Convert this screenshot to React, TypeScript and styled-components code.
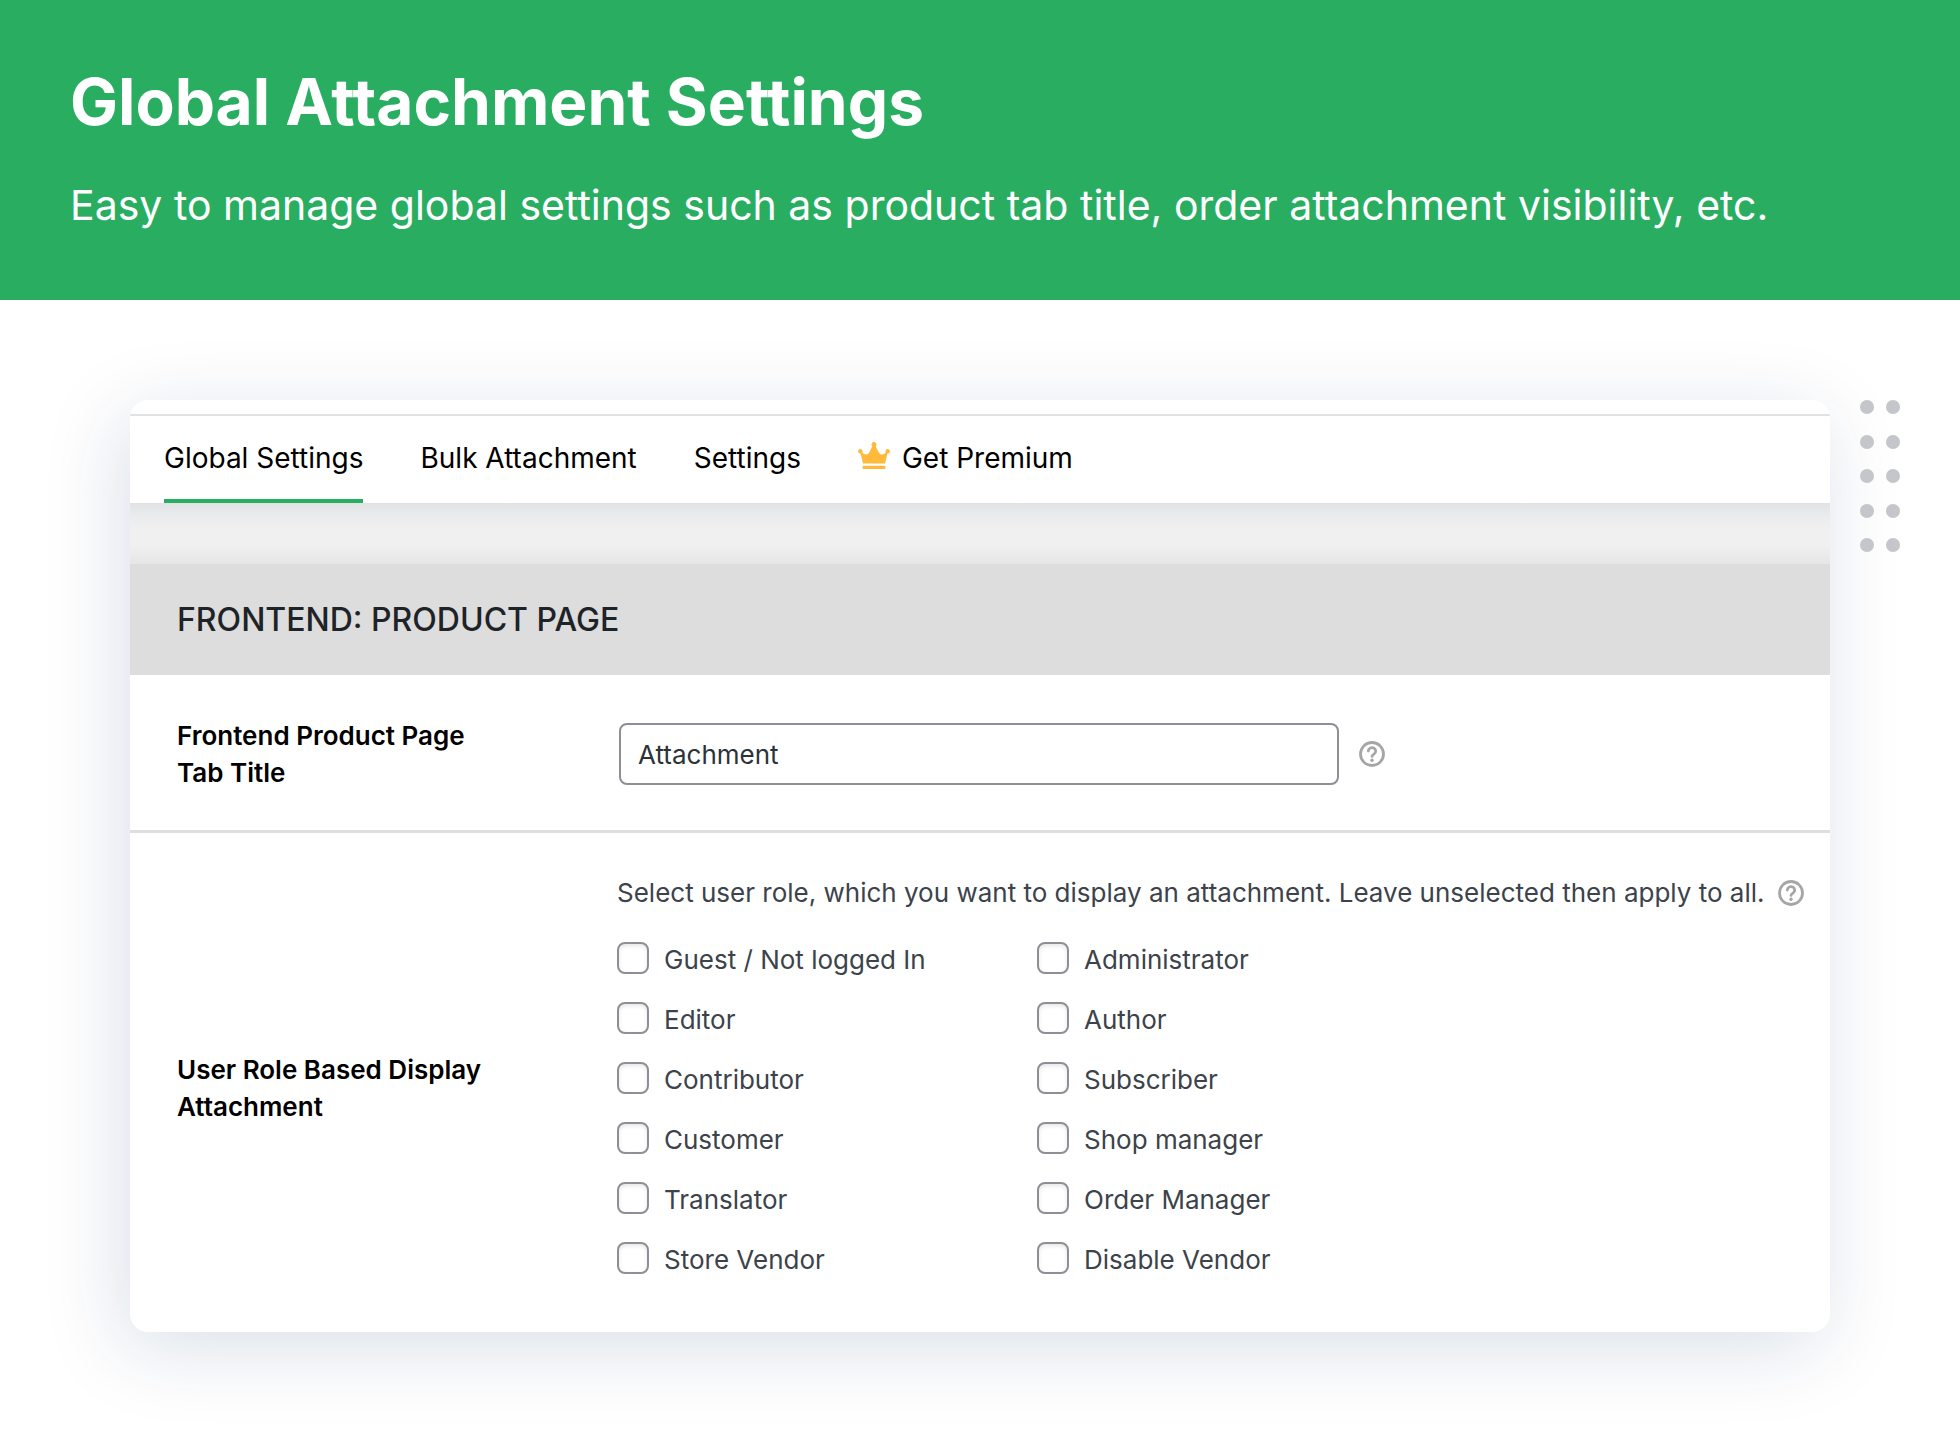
import React from "react";
import styled, { createGlobalStyle } from "styled-components";

const GlobalStyle = createGlobalStyle`
  *, *::before, *::after { box-sizing: border-box; }
  body {
    margin: 0;
    background: #ffffff;
    color: #3c434a;
    font-family: Inter, "Liberation Sans", sans-serif;
    font-size: 26px;
    line-height: 36px;
  }
`;

const Banner = styled.header`
  background: #29ae61;
  color: #ffffff;
  padding: 60px 70px 64px;
`;

const BannerTitle = styled.h1`
  margin: 0;
  font-size: 64px;
  font-weight: 700;
  line-height: 84px;
`;

const BannerText = styled.p`
  margin: 30px 0 0;
  font-size: 41px;
  font-weight: 400;
  line-height: 62px;
`;

const Stage = styled.main`
  display: flex;
  align-items: flex-start;
  gap: 30px;
  padding: 100px 60px 100px 130px;
`;

const Card = styled.section`
  flex: 1;
  min-width: 0;
  padding-top: 14px;
  overflow: hidden;
  border-radius: 18px;
  background: #ffffff;
  box-shadow: -8px 16px 80px rgba(2, 48, 102, 0.15);
`;

const Tabs = styled.nav`
  display: flex;
  gap: 57px;
  padding: 0 34px;
  border-top: 2px solid #e2e2e2;
`;

const Tab = styled.a<{ $active?: boolean }>`
  display: flex;
  align-items: center;
  gap: 12px;
  padding: 24px 0 23px;
  border-bottom: 4px solid ${(p) => (p.$active ? "#27ae60" : "transparent")};
  color: #000000;
  font-size: 28px;
  line-height: 36px;
  text-decoration: none;
  white-space: nowrap;
`;

const Band = styled.div`
  height: 61px;
  background: linear-gradient(#e1e2e4, #eaebec 12px, #f0f0f0 26px, #f0f0f0 42px, #e6e6e6);
`;

const SectionTitle = styled.h2`
  margin: 0;
  padding: 38px 47px;
  background: #dddddd;
  color: #1d2327;
  font-size: 32px;
  font-weight: 500;
  line-height: 35px;
`;

const Row = styled.div<{ $last?: boolean }>`
  display: grid;
  grid-template-columns: 392px 1fr;
  gap: 48px;
  align-items: center;
  padding: 42px 24px ${(p) => (p.$last ? 32 : 39)}px 47px;

  & + & {
    border-top: 3px solid #dfdfdf;
  }
`;

const labelText = `
  max-width: 320px;
  color: #000000;
  font-weight: 600;
  line-height: 37px;
`;

const FieldLabel = styled.label`
  ${labelText}
`;

const GroupLabel = styled.div`
  ${labelText}
`;

const Field = styled.div`
  display: flex;
  align-items: center;
  gap: 20px;
  padding-left: 2px;
`;

const TextInput = styled.input`
  width: 720px;
  height: 62px;
  padding: 0 17px;
  border: 2px solid #8c8f94;
  border-radius: 8px;
  background: #ffffff;
  color: #2c3338;
  font: inherit;
`;

const HelpButton = styled.button`
  display: inline-flex;
  flex: none;
  padding: 0;
  border: 0;
  background: none;
  color: #a6a6a6;
  cursor: help;
`;

const Group = styled.div``;

const Description = styled.div`
  display: flex;
  align-items: center;
  gap: 13px;
`;

const Options = styled.div`
  display: grid;
  grid-template-columns: repeat(2, 420px);
  row-gap: 24px;
  margin-top: 31px;
  padding-bottom: 22px;
`;

const Option = styled.label`
  display: flex;
  align-items: flex-start;
  gap: 15px;
`;

const Checkbox = styled.input`
  appearance: none;
  flex: none;
  width: 32px;
  height: 32px;
  margin: 0;
  border: 2px solid #8c8f94;
  border-radius: 8px;
  background: #ffffff;
  box-shadow: inset 0 2px 4px rgba(0, 0, 0, 0.1);

  &:checked {
    background: #27ae60;
  }
`;

const Dots = styled.div`
  display: grid;
  grid-template-columns: repeat(2, 14px);
  justify-content: space-between;
  align-content: space-between;
  width: 40px;
  height: 152px;
`;

const Dot = styled.span`
  height: 14px;
  border-radius: 50%;
  background: #c4c6cb;
`;

const CrownIcon = () => (
  <svg width="32" height="32" viewBox="0 0 32 32" fill="#ffba3c" aria-hidden="true">
    <circle cx="16" cy="2.6" r="2.5" />
    <circle cx="2.3" cy="9.2" r="2.2" />
    <circle cx="29.7" cy="9.2" r="2.2" />
    <path d="M5 21.600 2.200 10l1.400-.800C5.500 13 9.500 13.600 11.200 10.600L14.800 3.600h2.400l3.600 7c1.700 3 5.700 2.400 7.600-1.400l1.400.800L27 21.600z" />
    <rect x="4.600" y="23.700" width="22.800" height="3.400" rx="0.8" />
  </svg>
);

const HelpIcon = () => (
  <svg width="26" height="26" viewBox="0 0 26 26" fill="none" stroke="currentColor" strokeWidth="2.8" aria-hidden="true">
    <circle cx="13" cy="13" r="11.500" />
    <path d="M9.300 10.100a3.700 3.500 0 1 1 5.700 3c-1.300.800-2 1.200-2 2.300" strokeLinecap="round" />
    <circle cx="13" cy="19.200" r="1.700" fill="currentColor" stroke="none" />
  </svg>
);

const roles = [
  "Guest / Not logged In",
  "Administrator",
  "Editor",
  "Author",
  "Contributor",
  "Subscriber",
  "Customer",
  "Shop manager",
  "Translator",
  "Order Manager",
  "Store Vendor",
  "Disable Vendor",
];

export default function App() {
  return (
    <>
      <GlobalStyle />
      <Banner>
        <BannerTitle>Global Attachment Settings</BannerTitle>
        <BannerText>
          Easy to manage global settings such as product tab title, order attachment visibility, etc.
        </BannerText>
      </Banner>
      <Stage>
        <Card>
          <Tabs aria-label="Settings sections">
            <Tab href="#global" $active aria-current="page">Global Settings</Tab>
            <Tab href="#bulk">Bulk Attachment</Tab>
            <Tab href="#settings">Settings</Tab>
            <Tab href="#premium">
              <CrownIcon />
              Get Premium
            </Tab>
          </Tabs>
          <Band />
          <SectionTitle>FRONTEND: PRODUCT PAGE</SectionTitle>
          <Row>
            <FieldLabel htmlFor="tab-title">Frontend Product Page Tab Title</FieldLabel>
            <Field>
              <TextInput id="tab-title" type="text" defaultValue="Attachment" />
              <HelpButton type="button" aria-label="Help: tab title">
                <HelpIcon />
              </HelpButton>
            </Field>
          </Row>
          <Row $last>
            <GroupLabel id="roles-label">User Role Based Display Attachment</GroupLabel>
            <Group role="group" aria-labelledby="roles-label">
              <Description>
                <span>
                  Select user role, which you want to display an attachment. Leave unselected then apply to all.
                </span>
                <HelpButton type="button" aria-label="Help: user roles">
                  <HelpIcon />
                </HelpButton>
              </Description>
              <Options>
                {roles.map((role) => (
                  <Option key={role}>
                    <Checkbox type="checkbox" />
                    {role}
                  </Option>
                ))}
              </Options>
            </Group>
          </Row>
        </Card>
        <Dots aria-hidden="true">
          {Array.from({ length: 10 }, (_, i) => (
            <Dot key={i} />
          ))}
        </Dots>
      </Stage>
    </>
  );
}
